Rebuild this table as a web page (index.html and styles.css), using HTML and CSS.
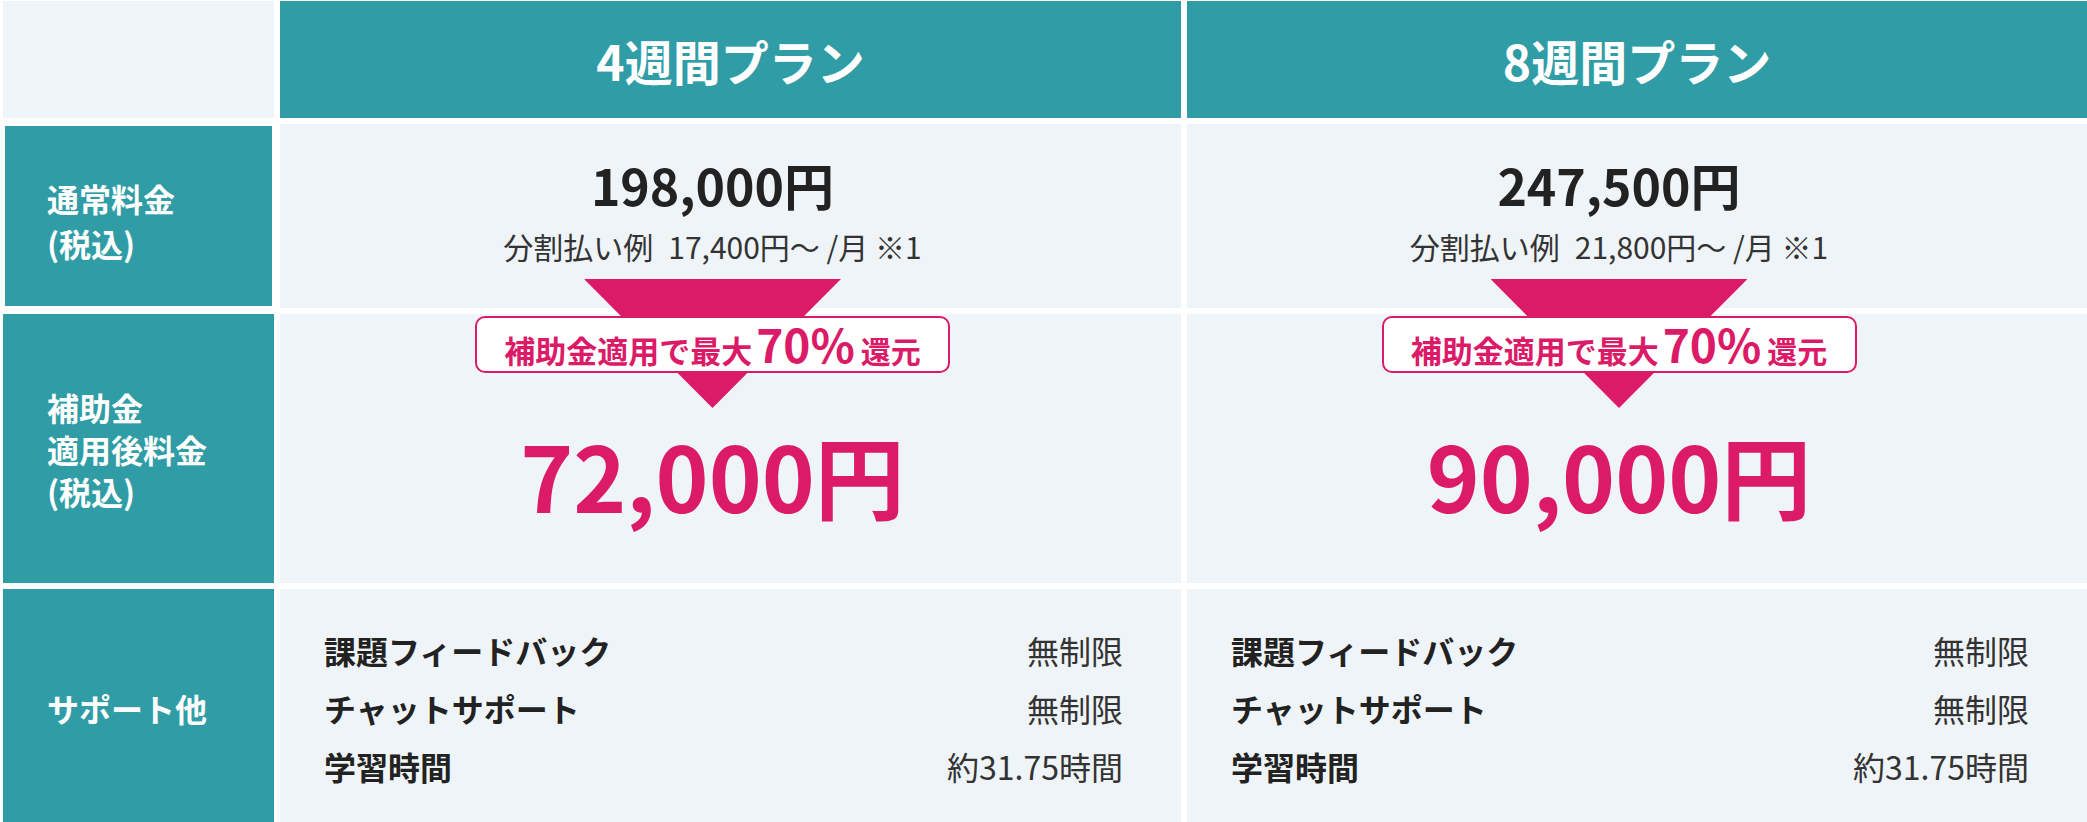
FILE: index.html
```html
<!DOCTYPE html>
<html lang="ja">
<head>
<meta charset="utf-8">
<title>料金プラン</title>
<link rel="stylesheet" href="styles.css">
</head>
<body>
<div class="plan-table">
  <div class="cell corner"></div>
  <div class="cell head">4週間プラン</div>
  <div class="cell head">8週間プラン</div>

  <div class="cell label label-inset">通常料金<br>(税込)</div>
  <div class="cell price-cell">
    <div class="price">198,000円</div>
    <div class="installment">分割払い例&ensp;17,400円〜 /月 ※1</div>
  </div>
  <div class="cell price-cell">
    <div class="price">247,500円</div>
    <div class="installment">分割払い例&ensp;21,800円〜 /月 ※1</div>
  </div>

  <div class="cell label">補助金<br>適用後料金<br>(税込)</div>
  <div class="cell sub-cell">
    <div class="arrow"></div>
    <div class="badge"><span class="b-main">補助金適用で最大</span><span class="b-big">70%</span><span class="b-end">還元</span></div>
    <div class="big-price">72,000円</div>
  </div>
  <div class="cell sub-cell">
    <div class="arrow"></div>
    <div class="badge"><span class="b-main">補助金適用で最大</span><span class="b-big">70%</span><span class="b-end">還元</span></div>
    <div class="big-price">90,000円</div>
  </div>

  <div class="cell label">サポート他</div>
  <div class="cell support">
    <div class="sup-row"><span class="sup-key">課題フィードバック</span><span class="sup-val">無制限</span></div>
    <div class="sup-row"><span class="sup-key">チャットサポート</span><span class="sup-val">無制限</span></div>
    <div class="sup-row"><span class="sup-key">学習時間</span><span class="sup-val">約31.75時間</span></div>
  </div>
  <div class="cell support">
    <div class="sup-row"><span class="sup-key">課題フィードバック</span><span class="sup-val">無制限</span></div>
    <div class="sup-row"><span class="sup-key">チャットサポート</span><span class="sup-val">無制限</span></div>
    <div class="sup-row"><span class="sup-key">学習時間</span><span class="sup-val">約31.75時間</span></div>
  </div>
</div>
</body>
</html>
```
FILE: styles.css
```css
html, body {
  margin: 0;
  padding: 0;
  background: #ffffff;
  font-family: "Noto Sans CJK JP", "Noto Sans", sans-serif;
  overflow: hidden;
}

.plan-table {
  display: grid;
  grid-template-columns: 271px 901px 900px;
  grid-template-rows: 117px 184px 269px auto;
  gap: 6px;
  margin: 1px 0 0 3px;
}

.cell {
  box-sizing: border-box;
}

.corner {
  background: #eff4f8;
}

.head {
  background: #309da6;
  color: #ffffff;
  font-weight: 700;
  font-size: 48px;
  line-height: 1;
  display: flex;
  align-items: center;
  justify-content: center;
}

.label {
  background: #309da6;
  color: #ffffff;
  font-weight: 700;
  font-size: 32px;
  line-height: 42px;
  display: flex;
  align-items: center;
  padding-left: 44px;
}

.label-inset {
  margin: 2px;
  padding-left: 42px;
  padding-top: 10px;
  line-height: 45px;
}

.price-cell {
  background: #eff4f8;
  display: flex;
  flex-direction: column;
  align-items: center;
  padding: 35px 36px 0 0;
}

.price {
  font-size: 50px;
  font-weight: 700;
  line-height: 1;
  color: #222222;
}

.installment {
  font-size: 30px;
  line-height: 1;
  margin-top: 22px;
  color: #333333;
}

.sub-cell {
  background: #eff4f8;
  position: relative;
  display: flex;
  flex-direction: column;
  align-items: center;
  padding: 2px 36px 0 0;
}

.arrow {
  position: absolute;
  top: -35px;
  left: calc(50% - 18px);
  transform: translateX(-50%);
  width: 257px;
  height: 129px;
  background: #dc1b68;
  clip-path: polygon(0 0, 100% 0, 50% 100%);
}

.badge {
  position: relative;
  z-index: 1;
  box-sizing: border-box;
  width: 475px;
  height: 57px;
  border: 2px solid #dc1b68;
  border-radius: 10px;
  background: #ffffff;
  color: #dc1b68;
  font-weight: 700;
  display: flex;
  justify-content: center;
  align-items: baseline;
  padding-top: 2px;
}

.badge span {
  line-height: 1;
}

.b-main {
  font-size: 31px;
}

.b-big {
  font-size: 46px;
  margin: 0 6px 0 4px;
}

.b-end {
  font-size: 30px;
}

.big-price {
  font-size: 90px;
  font-weight: 700;
  line-height: 1;
  color: #dc1b68;
  margin-top: 56px;
}

.support {
  background: #eff4f8;
  display: flex;
  flex-direction: column;
  gap: 26px;
  padding: 45px 58px 45px 44px;
}

.sup-row {
  display: flex;
  justify-content: space-between;
  font-size: 32px;
  line-height: 1;
}

.sup-key {
  font-weight: 700;
  color: #222222;
}

.sup-val {
  font-weight: 400;
  color: #333333;
}
```
